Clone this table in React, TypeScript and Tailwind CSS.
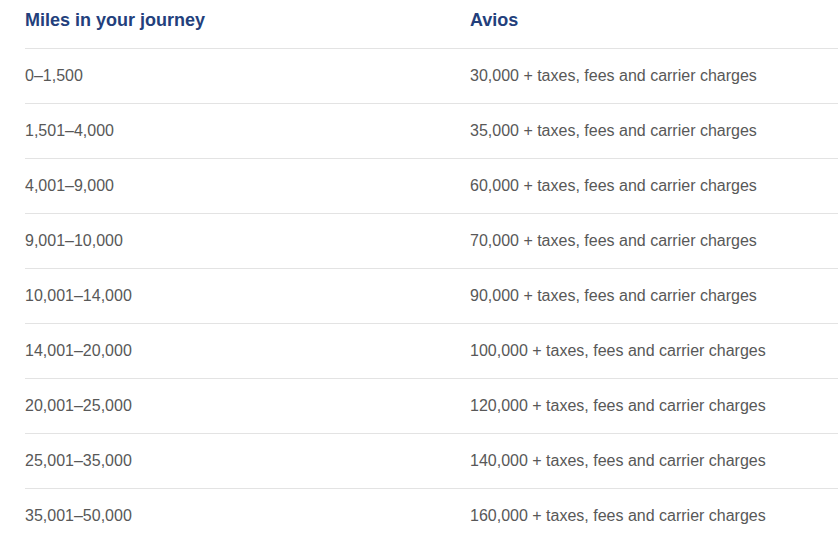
const rows: [string, string][] = [
  ["0–1,500", "30,000"],
  ["1,501–4,000", "35,000"],
  ["4,001–9,000", "60,000"],
  ["9,001–10,000", "70,000"],
  ["10,001–14,000", "90,000"],
  ["14,001–20,000", "100,000"],
  ["20,001–25,000", "120,000"],
  ["25,001–35,000", "140,000"],
  ["35,001–50,000", "160,000"],
]

export default function App() {
  return (
    <div className="w-[838px] h-[542px] overflow-hidden bg-white pl-[25px] font-['Liberation_Sans',Arial,sans-serif]">
      <div className="grid grid-cols-[445px_1fr] h-[48px] items-center pb-[7px] text-[18px] font-bold text-[#233f7c]">
        <div>Miles in your journey</div>
        <div>Avios</div>
      </div>
      {rows.map(([miles, avios]) => (
        <div
          key={miles}
          className="grid grid-cols-[445px_1fr] h-[55px] items-center border-t border-[#e3e3e3] text-[16px] text-[#585858]"
        >
          <div>{miles}</div>
          <div>{avios} + taxes, fees and carrier charges</div>
        </div>
      ))}
    </div>
  )
}
